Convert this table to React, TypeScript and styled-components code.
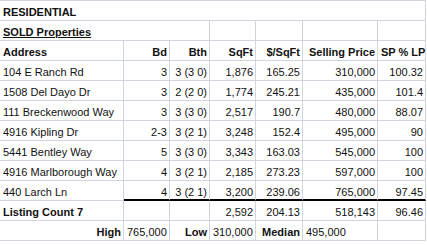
import styled, { createGlobalStyle } from "styled-components"

const GlobalStyle = createGlobalStyle`
    html, body {
        margin: 0;
        padding: 0;
        background: #ffffff;
    }
    body {
        font-family: "Liberation Sans", Arial, sans-serif;
        font-size: 11px;
        color: #111;
    }
`

interface SoldRow {
    address: string
    bd: string
    bth: string
    sqft: string
    perSqft: string
    price: string
    spLp: string
}

const rows: SoldRow[] = [
    { address: "104 E Ranch Rd", bd: "3", bth: "3 (3 0)", sqft: "1,876", perSqft: "165.25", price: "310,000", spLp: "100.32" },
    { address: "1508 Del Dayo Dr", bd: "3", bth: "2 (2 0)", sqft: "1,774", perSqft: "245.21", price: "435,000", spLp: "101.4" },
    { address: "111 Breckenwood Way", bd: "3", bth: "3 (3 0)", sqft: "2,517", perSqft: "190.7", price: "480,000", spLp: "88.07" },
    { address: "4916 Kipling Dr", bd: "2-3", bth: "3 (2 1)", sqft: "3,248", perSqft: "152.4", price: "495,000", spLp: "90" },
    { address: "5441 Bentley Way", bd: "5", bth: "3 (3 0)", sqft: "3,343", perSqft: "163.03", price: "545,000", spLp: "100" },
    { address: "4916 Marlborough Way", bd: "4", bth: "3 (2 1)", sqft: "2,185", perSqft: "273.23", price: "597,000", spLp: "100" },
    { address: "440 Larch Ln", bd: "4", bth: "3 (2 1)", sqft: "3,200", perSqft: "239.06", price: "765,000", spLp: "97.45" },
]

function App() {
    return (
        <>
            <GlobalStyle />
            <Sheet>
                <Cell $span={7} $bold>RESIDENTIAL</Cell>

                <Cell $span={3} $bold $underline>SOLD Properties</Cell>
                <Cell />
                <Cell />
                <Cell />
                <Cell />

                <Cell $bold>Address</Cell>
                <Cell $bold $right>Bd</Cell>
                <Cell $bold $right>Bth</Cell>
                <Cell $bold $right>SqFt</Cell>
                <Cell $bold $right>$/SqFt</Cell>
                <Cell $bold $right>Selling Price</Cell>
                <Cell $bold $right>SP % LP</Cell>

                {rows.map((row, index) => {
                    const last = index === rows.length - 1
                    return [
                        <Cell key={`a${index}`}>{row.address}</Cell>,
                        <Cell key={`b${index}`} $right $thick={last}>{row.bd}</Cell>,
                        <Cell key={`c${index}`} $right $thick={last}>{row.bth}</Cell>,
                        <Cell key={`d${index}`} $right $thick={last}>{row.sqft}</Cell>,
                        <Cell key={`e${index}`} $right $thick={last}>{row.perSqft}</Cell>,
                        <Cell key={`f${index}`} $right $thick={last}>{row.price}</Cell>,
                        <Cell key={`g${index}`} $right $thick={last}>{row.spLp}</Cell>,
                    ]
                })}

                <Cell $bold>Listing Count 7</Cell>
                <Cell />
                <Cell />
                <Cell $right>2,592</Cell>
                <Cell $right>204.13</Cell>
                <Cell $right>518,143</Cell>
                <Cell $right>96.46</Cell>

                <Cell $bold $right>High</Cell>
                <Cell>765,000</Cell>
                <Cell $bold $right>Low</Cell>
                <Cell>310,000</Cell>
                <Cell $bold $right>Median</Cell>
                <Cell>495,000</Cell>
                <Cell />
            </Sheet>
        </>
    )
}

export default App

const Sheet = styled.div`
    display: grid;
    grid-template-columns: 124px 46px 40px 46px 47px 75px 48px;
    grid-auto-rows: 20px;
    width: 426px;
    border-top: 1px solid #d0d6df;
`

const Cell = styled.div<{ $span?: number; $bold?: boolean; $right?: boolean; $underline?: boolean; $thick?: boolean }>`
    grid-column: span ${p => p.$span ?? 1};
    box-sizing: border-box;
    height: 20px;
    padding: 4px 2px 0 3px;
    line-height: 14px;
    white-space: nowrap;
    overflow: hidden;
    text-align: ${p => (p.$right ? "right" : "left")};
    font-weight: ${p => (p.$bold ? 700 : 400)};
    text-decoration: ${p => (p.$underline ? "underline" : "none")};
    border-right: 1px solid #d0d6df;
    border-bottom: ${p => (p.$thick ? "2px solid #000" : "1px solid #d0d6df")};
`
